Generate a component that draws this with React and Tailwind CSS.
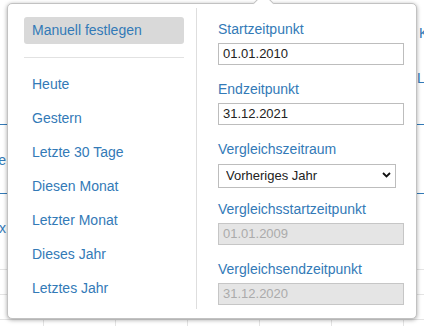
const presets = [
  "Heute",
  "Gestern",
  "Letzte 30 Tage",
  "Diesen Monat",
  "Letzter Monat",
  "Dieses Jahr",
  "Letztes Jahr",
];

function TableRow() {
  return (
    <div className="flex h-[25px] border-t border-[#e4e4e4]">
      <div className="w-[43px]" />
      <div className="w-[72px] border-l border-[#e4e4e4]" />
      <div className="w-[72px] border-l border-[#e4e4e4]" />
      <div className="w-[72px] border-l border-[#e4e4e4]" />
      <div className="w-[72px] border-l border-[#e4e4e4]" />
      <div className="w-[72px] border-l border-[#e4e4e4]" />
      <div className="flex-1 border-l border-[#e4e4e4]" />
    </div>
  );
}

function Field({ label, value, disabled }) {
  return (
    <>
      <label className="block h-[18px] text-[14px] leading-[18px] text-[#337ab7]">{label}</label>
      <div
        className={
          disabled
            ? "mt-[5px] h-[22px] w-[186px] border border-[#c6c6c6] bg-[#e5e5e5] pl-[4px] text-[13px] leading-[20px] text-[#ababab]"
            : "mt-[5px] h-[22px] w-[186px] border border-[#bdbdbd] bg-white pl-[4px] text-[13px] leading-[20px] text-[#222]"
        }
      >
        {value}
      </div>
    </>
  );
}

export default function App() {
  return (
    <div className="relative h-[326px] w-[424px] overflow-hidden bg-white font-['Liberation_Sans',Arial,sans-serif]">
      {/* page behind the popover */}
      <div className="flex flex-col text-[14px] leading-[18px] text-[#337ab7]">
        <div className="h-[24px]" />
        <div className="h-[18px] whitespace-nowrap pl-[419px]">Ka</div>
        <div className="h-[27px]" />
        <div className="h-[18px] whitespace-nowrap pl-[417px]">Lu</div>
        <div className="h-[37px]" />
        <div className="h-px bg-[#337ab7]" />
        <div className="h-[26px]" />
        <div className="flex h-[18px] w-[6px] justify-end whitespace-nowrap">Name</div>
        <div className="h-[24px]" />
        <div className="h-px bg-[#337ab7]" />
        <div className="h-[25px]" />
        <div className="flex h-[18px] w-[6px] justify-end whitespace-nowrap">Index</div>
        <div className="h-[32px]" />
        <TableRow />
        <TableRow />
        <TableRow />
      </div>

      {/* popover */}
      <div className="absolute left-[7px] top-[3px] h-[316px] w-[410px] rounded-[5px] border border-[#c2c2c2] bg-white shadow-[0_1px_4px_rgba(0,0,0,0.35)]">
        <div className="absolute -top-[8px] left-[248px] h-[15px] w-[15px] rotate-45 border-l border-t border-[#c2c2c2] bg-white" />

        <div className="relative flex h-full pb-[9px] pt-[4px]">
          {/* presets */}
          <div className="w-[188px] pl-[16px] pr-[12px] pt-[9px]">
            <div className="h-[27px] rounded-[3px] bg-[#d9d9d9] px-[8px] text-[14px] leading-[27px] text-[#337ab7]">
              Manuell festlegen
            </div>
            <div className="mt-[13px] h-px bg-[#e2e2e2]" />
            <div className="mt-[13px] flex flex-col gap-[7px]">
              {presets.map((p) => (
                <div key={p} className="h-[27px] px-[8px] text-[14px] leading-[27px] text-[#337ab7]">
                  {p}
                </div>
              ))}
            </div>
          </div>

          {/* dates */}
          <div className="flex-1 border-l border-[#dedede] pl-[21px] pt-[12px]">
            <Field label="Startzeitpunkt" value="01.01.2010" />
            <div className="h-[15px]" />
            <Field label="Endzeitpunkt" value="31.12.2021" />
            <div className="h-[15px]" />
            <label className="block h-[18px] text-[14px] leading-[18px] text-[#337ab7]">Vergleichszeitraum</label>
            <div className="relative mt-[5px] h-[24px] w-[178px]">
              <select className="h-full w-full appearance-none border border-[#bdbdbd] bg-white pl-[7px] text-[13px] text-[#222]">
                <option>Vorheriges Jahr</option>
              </select>
              <svg className="pointer-events-none absolute right-[5px] top-[9px]" width="9" height="6" viewBox="0 0 9 6">
                <polyline points="1,1 4.5,4.5 8,1" fill="none" stroke="#111" strokeWidth="1.8" />
              </svg>
            </div>
            <div className="h-[13px]" />
            <Field label="Vergleichsstartzeitpunkt" value="01.01.2009" disabled />
            <div className="h-[15px]" />
            <Field label="Vergleichsendzeitpunkt" value="31.12.2020" disabled />
          </div>
        </div>
      </div>
    </div>
  );
}
